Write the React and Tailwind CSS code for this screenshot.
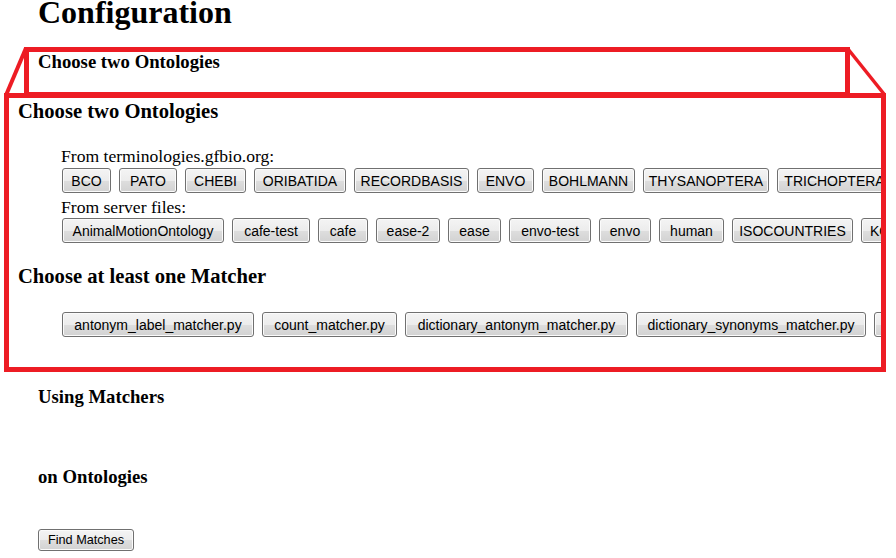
import React from "react";

const row1 = [
  ["BCO", "w-[49px]"],
  ["PATO", "w-[58px]"],
  ["CHEBI", "w-[61px]"],
  ["ORIBATIDA", "w-[92px]"],
  ["RECORDBASIS", "w-[115px]"],
  ["ENVO", "w-[57px]"],
  ["BOHLMANN", "w-[93px]"],
  ["THYSANOPTERA", "w-[126px]"],
  ["TRICHOPTERA", "w-[115px]"],
];

const row2 = [
  ["AnimalMotionOntology", "w-[162px]"],
  ["cafe-test", "w-[78px]"],
  ["cafe", "w-[50px]"],
  ["ease-2", "w-[64px]"],
  ["ease", "w-[53px]"],
  ["envo-test", "w-[82px]"],
  ["envo", "w-[52px]"],
  ["human", "w-[65px]"],
  ["ISOCOUNTRIES", "w-[121px]"],
  ["KOPPEN", "w-[90px] justify-start pl-[8px]"],
];

const matchers = [
  ["antonym_label_matcher.py", "w-[192px]"],
  ["count_matcher.py", "w-[135px]"],
  ["dictionary_antonym_matcher.py", "w-[223px]"],
  ["dictionary_synonyms_matcher.py", "w-[230px]"],
  ["edit_distance_matcher.py", "w-[190px]"],
];

const btnBase =
  "h-[25px] shrink-0 flex items-center justify-center rounded-[3px] border border-[#707070] bg-[linear-gradient(#f4f4f4_0%,#ececec_50%,#dedede_51%,#d2d2d2_100%)] shadow-[inset_0_0_0_1px_#fbfbfb] text-[14px] text-black font-['Liberation_Sans',Arial,sans-serif] leading-none whitespace-nowrap";

function Btn({ label, w }) {
  return <button className={`${btnBase} ${w}`}>{label}</button>;
}

export default function App() {
  return (
    <div className="relative w-[896px] h-[558px] overflow-hidden bg-white text-black font-['Liberation_Serif','Times_New_Roman',serif]">
      <h1 className="pl-[38px] text-[32px] font-bold leading-[25px]">Configuration</h1>

      <div className="mt-[22px] ml-[24px] w-[826px] h-[50px] border-[5px] border-[#ed1c24]">
        <h3 className="pl-[9px] text-[18.72px] font-bold leading-[20px]">Choose two Ontologies</h3>
      </div>

      <div className="relative mt-[-4px] ml-[4px] w-[882px] h-[279px] border-[5px] border-[#ed1c24] overflow-hidden">
        <h3 className="mt-[1px] pl-[9px] text-[20.6px] font-bold leading-[24px]">Choose two Ontologies</h3>
        <div className="pl-[52px]">
          <div className="mt-[23px] text-[17.6px] leading-[20px]">From terminologies.gfbio.org:</div>
          <div className="mt-[2px] ml-[1px] flex flex-nowrap gap-2">
            {row1.map(([l, w]) => (
              <Btn key={l} label={l} w={w} />
            ))}
          </div>
          <div className="mt-[4px] text-[17.6px] leading-[20px]">From server files:</div>
          <div className="mt-[1px] ml-[1px] flex flex-nowrap gap-2">
            {row2.map(([l, w]) => (
              <Btn key={l} label={l} w={w} />
            ))}
          </div>
        </div>
        <h3 className="mt-[21px] pl-[9px] text-[20.6px] font-bold leading-[24px]">Choose at least one Matcher</h3>
        <div className="mt-[24px] pl-[53px] flex flex-nowrap gap-2">
          {matchers.map(([l, w]) => (
            <Btn key={l} label={l} w={w} />
          ))}
        </div>
      </div>

      <h3 className="mt-[14px] pl-[38px] text-[18.72px] font-bold leading-[22px]">Using Matchers</h3>
      <h3 className="mt-[58px] pl-[38px] text-[18.72px] font-bold leading-[22px]">on Ontologies</h3>
      <button className="mt-[41px] ml-[38px] w-[96px] h-[22px] flex items-center justify-center rounded-[3px] border border-[#707070] bg-[linear-gradient(#f4f4f4_0%,#ececec_50%,#dedede_51%,#d2d2d2_100%)] shadow-[inset_0_0_0_1px_#fbfbfb] text-[12.7px] text-black font-['Liberation_Sans',Arial,sans-serif] leading-none whitespace-nowrap">
        Find Matches
      </button>

      <svg className="absolute left-0 top-0 pointer-events-none" width="896" height="558" viewBox="0 0 896 558">
        <line x1="26" y1="48" x2="6.5" y2="94" stroke="#ed1c24" strokeWidth="4" />
        <line x1="848" y1="49" x2="884" y2="94" stroke="#ed1c24" strokeWidth="3.5" />
      </svg>
    </div>
  );
}
